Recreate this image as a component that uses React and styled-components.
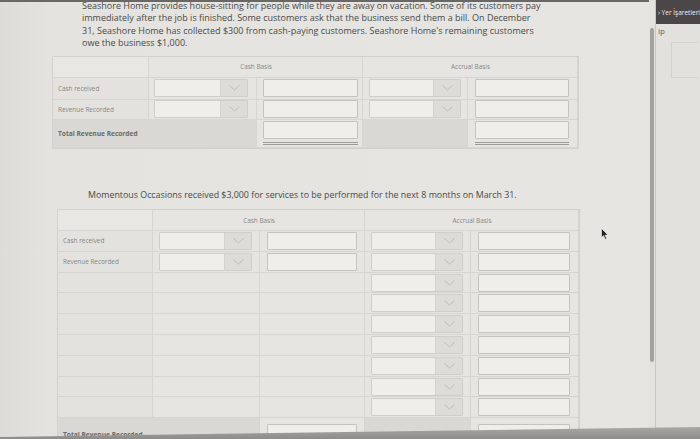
import styled, { createGlobalStyle } from 'styled-components'

const Global = createGlobalStyle`
  html, body { margin: 0; padding: 0; background: #e5e4e0; }
  body { font-family: "Open Sans", "Liberation Sans", sans-serif; }
`

const Page = styled.div`
  width: 700px;
  height: 439px;
  position: relative;
  overflow: hidden;
  display: flex;
  background: #e5e4e0;
`

const Main = styled.div`
  width: 651px;
  height: 439px;
  overflow: hidden;
  display: flex;
  flex-direction: column;
  border-top: 2px solid #6a6866;
  box-sizing: border-box;
  background: linear-gradient(90deg, #dddcd8 0px, #e4e3df 50px, #e6e5e1 100%);
`

const Para = styled.div`
  margin: -2px 0 0 82px;
  font-size: 9px;
  line-height: 12.4px;
  color: #4a4a48;
`

const Line = styled.div`
  white-space: nowrap;
`

const Lead = styled.p`
  margin: 40px 0 0 88px;
  font-size: 8.85px;
  line-height: 12.4px;
  color: #4a4a48;
  white-space: nowrap;
`

const Sheet = styled.div`
  margin: ${p => p.$top}px 0 0 ${p => p.$left}px;
  width: ${p => p.$width}px;
  display: grid;
  grid-template-columns: ${p => p.$cols};
  grid-template-rows: ${p => p.$rows};
  border: 1px solid #d2d1cd;
  background: #e6e5e1;
  font-size: 6.4px;
  color: #7b7a77;
`

const Cell = styled.div`
  grid-column: span ${p => p.$span || 1};
  display: flex;
  align-items: ${p => (p.$low ? 'flex-end' : 'center')};
  justify-content: ${p => (p.$center ? 'center' : 'flex-start')};
  padding: 0 ${p => p.$pr ?? 4}px ${p => (p.$low ? 8 : 0)}px ${p => p.$pl ?? 5}px;
  border-right: 1px solid #d6d5d1;
  border-bottom: 1px solid #d6d5d1;
  background: ${p => p.$bg || 'transparent'};
  min-width: 0;
  box-sizing: border-box;
`

const Label = styled.span`
  font-weight: ${p => (p.$bold ? 700 : 400)};
  color: ${p => (p.$bold ? '#6b6a67' : '#878683')};
  font-size: ${p => (p.$bold ? 6.6 : 6.4)}px;
  white-space: nowrap;
`

const Select = styled.div`
  flex: 1 0 auto;
  height: 18px;
  display: flex;
  border: 1px solid #cfceca;
  border-radius: 1px;
  background: #efeeea;
  box-sizing: border-box;
`

const SelectField = styled.div`
  flex: 1;
`

const SelectArrow = styled.div`
  width: 26px;
  border-left: 1px solid #d3d2ce;
  background: #dedcd8;
  display: flex;
  align-items: center;
  justify-content: center;
`

const Field = styled.div`
  flex: 1 0 auto;
  height: 18px;
  border: 1px solid #c4c3bf;
  border-radius: 1px;
  background: #efeeea;
  box-sizing: border-box;
`

const TotalWrap = styled.div`
  flex: 1;
  display: flex;
  flex-direction: column;
  gap: 3px;
`

const DoubleRule = styled.div`
  height: 3px;
  border-top: 1px solid #9c9b97;
  border-bottom: 1px solid #9c9b97;
  box-sizing: border-box;
`

const Scroll = styled.div`
  width: 6px;
  padding-top: 28px;
  display: flex;
  justify-content: center;
  background: #e3e2de;
`

const Thumb = styled.div`
  width: 4px;
  height: 334px;
  border-radius: 2px;
  background: #a3a29f;
`

const Side = styled.div`
  flex: 1;
  display: flex;
  flex-direction: column;
  border-left: 1px solid #c7c6c2;
  background: #e2e1dd;
`

const SideBar = styled.div`
  height: 24px;
  background: #4b4648;
  color: #f1eff0;
  font-size: 6.5px;
  display: flex;
  align-items: center;
  padding-left: 2px;
  white-space: nowrap;
  overflow: hidden;
`

const SideBody = styled.div`
  flex: 1;
  padding: 1px 0 0 2px;
  font-size: 8px;
  color: #5b5a58;
`

const SideBox = styled.div`
  margin: 6px 0 0 13px;
  width: 26px;
  height: 34px;
  border: 1px solid #d3d2ce;
  border-right: none;
`

const Bezel = styled.div`
  position: absolute;
  left: 0;
  right: 0;
  bottom: 0;
  height: 12px;
  background: linear-gradient(180deg, #a9a8a4, #8d8c88);
  clip-path: polygon(0 10px, 100% 0, 100% 100%, 0 100%);
`

const Pointer = styled.svg`
  position: absolute;
  left: 601px;
  top: 228px;
`

const Chevron = () => (
  <svg width="11" height="6" viewBox="0 0 11 6">
    <polyline points="0.5,0.5 5.5,5 10.5,0.5" fill="none" stroke="#bdbcb8" strokeWidth="1" />
  </svg>
)

const Dropdown = () => (
  <Select>
    <SelectField />
    <SelectArrow>
      <Chevron />
    </SelectArrow>
  </Select>
)

const LABEL_BG = '#e3e2de'
const TOTAL_BG = '#d9d8d4'

const FirstTable = () => (
  <Sheet $top={6} $left={52} $width={525} $cols="96px 108px 106px 105px 110px" $rows="21px 22px 20px 28px">
    <Cell $bg="#e8e7e3" />
    <Cell $span={2} $center><Label>Cash Basis</Label></Cell>
    <Cell $span={2} $center><Label>Accrual Basis</Label></Cell>

    <Cell $bg={LABEL_BG}><Label>Cash received</Label></Cell>
    <Cell $pl={5} $pr={8}><Dropdown /></Cell>
    <Cell $pl={6} $pr={4}><Field /></Cell>
    <Cell $pl={6} $pr={6}><Dropdown /></Cell>
    <Cell $pl={7} $pr={8}><Field /></Cell>

    <Cell $bg={LABEL_BG}><Label>Revenue Recorded</Label></Cell>
    <Cell $pl={5} $pr={8}><Dropdown /></Cell>
    <Cell $pl={6} $pr={4}><Field /></Cell>
    <Cell $pl={6} $pr={6}><Dropdown /></Cell>
    <Cell $pl={7} $pr={8}><Field /></Cell>

    <Cell $bg={TOTAL_BG} $span={2}><Label $bold>Total Revenue Recorded</Label></Cell>
    <Cell $pl={6} $pr={4}>
      <TotalWrap><Field /><DoubleRule /></TotalWrap>
    </Cell>
    <Cell $bg={TOTAL_BG} />
    <Cell $pl={7} $pr={8}>
      <TotalWrap><Field /><DoubleRule /></TotalWrap>
    </Cell>
  </Sheet>
)

const secondRows = [
  { label: 'Cash received', cash: true },
  { label: 'Revenue Recorded', cash: true },
  {}, {}, {}, {}, {}, {}, {},
]

const SecondTable = () => (
  <Sheet
    $top={8}
    $left={57}
    $width={521}
    $cols="95px 107px 105px 106px 108px"
    $rows={`21px repeat(${secondRows.length}, 20.8px) 30px`}
  >
    <Cell $bg="#e8e7e3" />
    <Cell $span={2} $center><Label>Cash Basis</Label></Cell>
    <Cell $span={2} $center><Label>Accrual Basis</Label></Cell>

    {secondRows.map((row, i) => [
      <Cell key={`l${i}`} $bg={LABEL_BG}>{row.label && <Label>{row.label}</Label>}</Cell>,
      <Cell key={`a${i}`} $pl={6} $pr={7}>{row.cash && <Dropdown />}</Cell>,
      <Cell key={`b${i}`} $pl={7} $pr={7}>{row.cash && <Field />}</Cell>,
      <Cell key={`c${i}`} $pl={6} $pr={7}><Dropdown /></Cell>,
      <Cell key={`d${i}`} $pl={7} $pr={8}><Field /></Cell>,
    ])}

    <Cell $bg={TOTAL_BG} $span={2} $low><Label $bold>Total Revenue Recorded</Label></Cell>
    <Cell $pl={7} $pr={7}><Field /></Cell>
    <Cell $bg={TOTAL_BG} />
    <Cell $pl={7} $pr={8}><Field /></Cell>
  </Sheet>
)

export default function App() {
  return (
    <Page>
      <Global />
      <Main>
        <Para>
          <Line>Seashore Home provides house-sitting for people while they are away on vacation. Some of its customers pay</Line>
          <Line>immediately after the job is finished. Some customers ask that the business send them a bill. On December</Line>
          <Line>31, Seashore Home has collected $300 from cash-paying customers. Seashore Home's remaining customers</Line>
          <Line>owe the business $1,000.</Line>
        </Para>
        <FirstTable />
        <Lead>Momentous Occasions received $3,000 for services to be performed for the next 8 months on March 31.</Lead>
        <SecondTable />
      </Main>
      <Scroll>
        <Thumb />
      </Scroll>
      <Side>
        <SideBar>› Yer İşaretleri</SideBar>
        <SideBody>
          ip
          <SideBox />
        </SideBody>
      </Side>
      <Pointer width="8" height="12" viewBox="0 0 8 12">
        <path d="M0.5 0.5 L0.5 9.5 L2.6 7.6 L4.2 11.2 L5.6 10.6 L4.1 7.1 L7 7 Z" fill="#222" stroke="#eee" strokeWidth="0.6" />
      </Pointer>
      <Bezel />
    </Page>
  )
}
